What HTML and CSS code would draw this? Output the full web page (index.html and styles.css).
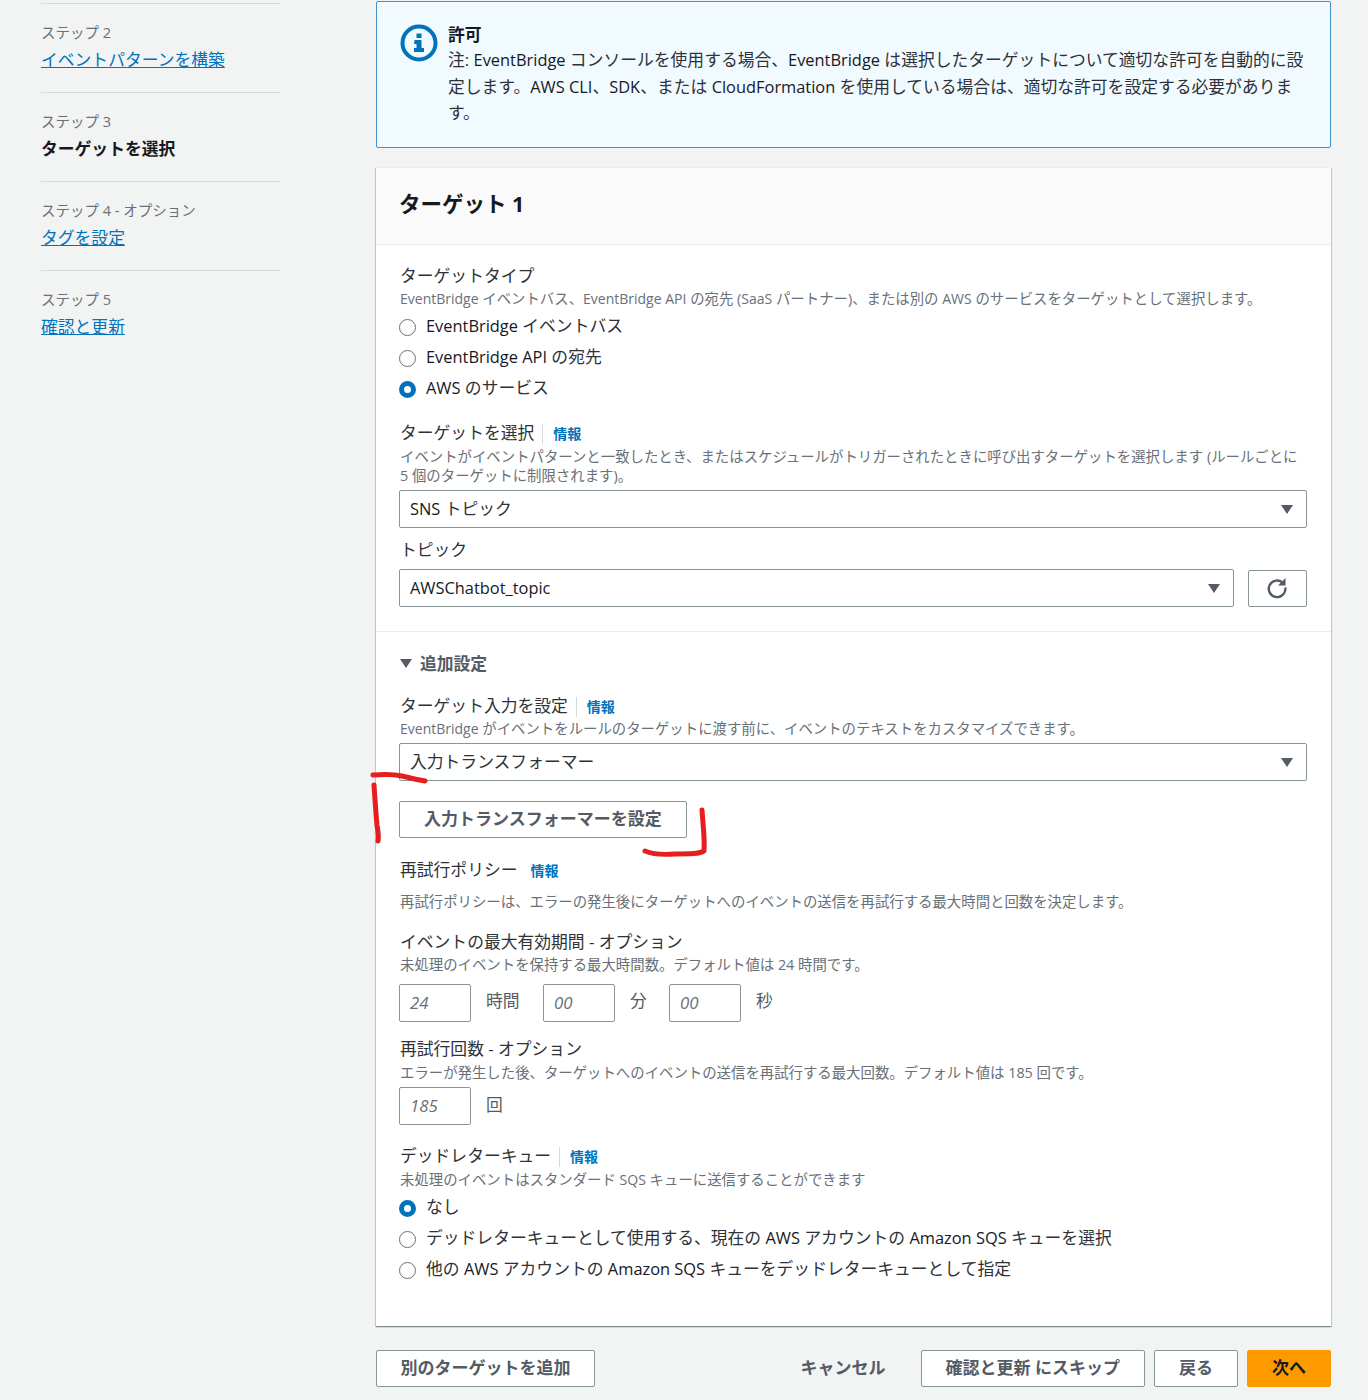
FILE: index.html
```html
<!DOCTYPE html>
<html lang="ja">
<head>
<meta charset="utf-8">
<title>ターゲットを選択</title>
<link rel="stylesheet" href="styles.css">
</head>
<body>
<div class="page">
  <nav class="steps">
    <div class="step"><div class="step-no">ステップ 2</div><a class="step-link" href="#">イベントパターンを構築</a></div>
    <div class="step"><div class="step-no">ステップ 3</div><div class="step-current">ターゲットを選択</div></div>
    <div class="step"><div class="step-no">ステップ 4 - オプション</div><a class="step-link" href="#">タグを設定</a></div>
    <div class="step"><div class="step-no">ステップ 5</div><a class="step-link" href="#">確認と更新</a></div>
  </nav>
  <main class="main">
    <section class="alert">
      <svg class="alert-icon" width="38" height="38" viewBox="0 0 38 38"><circle cx="19" cy="19" r="16.5" fill="none" stroke="#0073bb" stroke-width="4"/><rect x="16.5" y="9.5" width="5" height="4.5" fill="#0073bb"/><path d="M14.500 16h7v8h2.500v4h-10v-4h2.500v-4h-2.500z" fill="#0073bb"/></svg>
      <div class="alert-body">
        <div class="alert-title">許可</div>
        <p class="alert-text">
          <span class="alert-line">注: <span class="en">EventBridge</span> コンソールを使用する場合、<span class="en">EventBridge</span> は選択したターゲットについて適切な許可を自動的に設</span>
          <span class="alert-line">定します。<span class="en">AWS CLI</span>、<span class="en">SDK</span>、または <span class="en">CloudFormation</span> を使用している場合は、適切な許可を設定する必要がありま</span>
          <span class="alert-line">す。</span>
        </p>
      </div>
    </section>
    <section class="card">
      <h2 class="card-header">ターゲット 1</h2>
      <div class="card-top">
        <div class="label">ターゲットタイプ</div>
        <div class="desc"><span class="en">EventBridge</span> イベントバス、<span class="en">EventBridge API</span> の宛先 (<span class="en">SaaS</span> パートナー)、または別の <span class="en">AWS</span> のサービスをターゲットとして選択します。</div>
        <div class="radio-group">
          <div class="radio-row"><span class="radio"></span><span><span class="en">EventBridge</span> イベントバス</span></div>
          <div class="radio-row"><span class="radio"></span><span><span class="en">EventBridge API</span> の宛先</span></div>
          <div class="radio-row"><span class="radio checked"></span><span><span class="en">AWS</span> のサービス</span></div>
        </div>
        <div class="label label-select"><span>ターゲットを選択</span><a class="info info-rule" href="#">情報</a></div>
        <div class="desc desc-wrap">イベントがイベントパターンと一致したとき、またはスケジュールがトリガーされたときに呼び出すターゲットを選択します (ルールごとに 5 個のターゲットに制限されます)。</div>
        <div class="select select-sns"><span><span class="en">SNS</span> トピック</span><span class="caret"></span></div>
        <div class="label label-topic">トピック</div>
        <div class="topic-row">
          <div class="select select-grow"><span class="en">AWSChatbot_topic</span><span class="caret"></span></div>
          <button class="refresh" type="button" aria-label="更新"><svg width="22" height="22" viewBox="1 1 22 22"><path d="M17 6A8.300 8.300 0 1 0 19.300 10.500" fill="none" stroke="#545b64" stroke-width="2.400"/><path d="M19.500 1v7.500h-7.500z" fill="#545b64"/></svg></button>
        </div>
      </div>
      <div class="card-bottom">
        <div class="expander"><span class="expander-caret"></span>追加設定</div>
        <div class="label label-input"><span>ターゲット入力を設定</span><a class="info info-rule" href="#">情報</a></div>
        <div class="desc"><span class="en">EventBridge</span> がイベントをルールのターゲットに渡す前に、イベントのテキストをカスタマイズできます。</div>
        <div class="select select-input">入力トランスフォーマー<span class="caret"></span></div>
        <button class="btn btn-config" type="button">入力トランスフォーマーを設定</button>
        <div class="label label-retry"><span>再試行ポリシー</span><a class="info info-plain" href="#">情報</a></div>
        <div class="desc desc-retry">再試行ポリシーは、エラーの発生後にターゲットへのイベントの送信を再試行する最大時間と回数を決定します。</div>
        <div class="label label-age">イベントの最大有効期間 - オプション</div>
        <div class="desc">未処理のイベントを保持する最大時間数。デフォルト値は 24 時間です。</div>
        <div class="inputs">
          <span class="num">24</span><span class="unit unit-h">時間</span>
          <span class="num">00</span><span class="unit">分</span>
          <span class="num">00</span><span class="unit">秒</span>
        </div>
        <div class="label label-count">再試行回数 - オプション</div>
        <div class="desc desc-count">エラーが発生した後、ターゲットへのイベントの送信を再試行する最大回数。デフォルト値は 185 回です。</div>
        <div class="inputs inputs-count"><span class="num">185</span><span class="unit">回</span></div>
        <div class="label label-dlq"><span>デッドレターキュー</span><a class="info info-rule" href="#">情報</a></div>
        <div class="desc desc-dlq">未処理のイベントはスタンダード <span class="en">SQS</span> キューに送信することができます</div>
        <div class="radio-group">
          <div class="radio-row"><span class="radio checked"></span>なし</div>
          <div class="radio-row"><span class="radio"></span><span>デッドレターキューとして使用する、現在の <span class="en">AWS</span> アカウントの <span class="en">Amazon SQS</span> キューを選択</span></div>
          <div class="radio-row"><span class="radio"></span><span>他の <span class="en">AWS</span> アカウントの <span class="en">Amazon SQS</span> キューをデッドレターキューとして指定</span></div>
        </div>
      </div>
    </section>
    <footer class="footer">
      <button class="btn btn-add" type="button">別のターゲットを追加</button>
      <div class="footer-right">
        <button class="btn-link" type="button">キャンセル</button>
        <button class="btn" type="button">確認と更新 にスキップ</button>
        <button class="btn" type="button">戻る</button>
        <button class="btn btn-primary" type="button">次へ</button>
      </div>
    </footer>
  </main>
</div>
<svg class="marks" width="1368" height="1400" viewBox="0 0 1368 1400" aria-hidden="true">
  <g fill="none" stroke="#e61e1e" stroke-width="5" stroke-linecap="round" stroke-linejoin="round">
    <path d="M373 775C385 774 393 774 402 776C410 778 418 780 425 781"/>
    <path d="M374 785C375 800 376 815 377 825C378 832 379 836 378 841"/>
    <path d="M702 810C703 825 705 840 704 851C700 854 690 854 675 854C662 855 652 854 645 851"/>
  </g>
</svg>
</body>
</html>
```
FILE: styles.css
```css
* { box-sizing: border-box; }
html, body { margin: 0; padding: 0; }
body {
  position: relative;
  height: 1400px;
  overflow: hidden;
  background: #f2f3f3;
  color: #2e3238;
  font-family: "Open Sans", "Noto Sans CJK JP", sans-serif;
  font-size: 16.800px;
}
a { color: #0073bb; }
.en { font-size: 16.400px; color: #16191f; }
.page { display: flex; padding: 1px 37px 0 41px; gap: 96px; }
.steps { width: 239px; flex: none; margin-top: 2px; }
.step { height: 89px; padding-top: 17px; border-top: 1px solid #d5dbdb; }
.step-no { height: 25px; line-height: 24px; font-size: 14.500px; color: #687078; }
.step-link, .step-current { display: block; width: fit-content; line-height: 28px; font-size: 16.800px; }
.step-current { font-weight: 700; color: #16191f; }
.main { width: 955px; flex: none; }
.alert {
  display: flex; gap: 10px; height: 147px; padding: 22px 24px 0 23px;
  background: #f1faff; border: 1px solid #3f93c9; border-radius: 2px;
}
.alert-icon { flex: none; }
.alert-title { font-weight: 700; line-height: 22px; height: 23px; color: #16191f; }
.alert-text { margin: 0; line-height: 26.500px; }
.alert-line { display: block; white-space: nowrap; }
.card { margin-top: 19px; background: #fff; height: 1159px; box-shadow: 0 1px 1px rgba(0,28,36,.3), 1px 1px 1px rgba(0,28,36,.15), -1px 1px 1px rgba(0,28,36,.15); border-top: 1px solid #eaeded; }
.card-header { margin: 0; height: 77px; padding: 0 24px 0 23px; background: #fafafa; border-bottom: 1px solid #eaeded; color: #16191f; font-size: 21.500px; font-weight: 700; line-height: 72px; }
.card-top { padding: 19px 24px 0 23px; height: 387px; border-bottom: 1px solid #eaeded; }
.card-bottom { padding: 18px 24px 0 23px; }
.label { display: flex; align-items: center; height: 24px; line-height: 24px; padding-left: 1px; }
.desc { font-size: 14.400px; line-height: 19px; padding-left: 1px; color: #687078; margin-top: 1px; height: 19px; }
.desc .en { font-size: 14px; color: #687078; }
.desc-wrap { height: 38px; margin-top: 2px; padding-right: 5px; }
.radio-group { margin-top: 1px; }
.radio-row { display: flex; align-items: center; height: 31px; gap: 10px; }
.radio { width: 17px; height: 17px; flex: none; margin-top: 5px; border: 1.500px solid #687078; border-radius: 50%; background: #fff; }
.radio.checked { border: 5px solid #0073bb; }
.label-select { margin-top: 19px; }
.info { font-size: 14px; font-weight: 700; color: #0073bb; text-decoration: none; line-height: 20px; margin-top: 2px; }
.info-rule { margin-left: 8px; padding-left: 10px; border-left: 1px solid #d5dbdb; }
.info-plain { margin-left: 13px; }
.select { position: relative; display: flex; align-items: center; height: 38px; padding: 0 10px 2px; background: #fff; border: 1px solid #879596; border-radius: 2px; }
.select-sns { margin-top: 5px; }
.label-topic { margin-top: 10px; }
.topic-row { display: flex; gap: 14px; margin-top: 7px; }
.select-grow { flex: 1; }
.caret { position: absolute; right: 13px; top: 14px; width: 0; height: 0; border-left: 6.500px solid transparent; border-right: 6.500px solid transparent; border-top: 9px solid #545b64; }
.refresh { width: 59px; height: 37px; margin-top: 1px; display: flex; align-items: center; justify-content: center; padding: 0; background: #fff; border: 1px solid #879596; border-radius: 2px; }
.expander { display: flex; align-items: center; height: 26px; padding-left: 1px; font-weight: 700; font-size: 16.800px; color: #545b64; gap: 8px; }
.expander-caret { width: 0; height: 0; border-left: 6.500px solid transparent; border-right: 6.500px solid transparent; border-top: 9px solid #545b64; }
.label-input { margin-top: 18px; }
.select-input { margin-top: 5px; }
.btn { height: 37px; padding: 0 24px 5px; background: #fff; border: 1px solid #879596; border-radius: 2px; color: #545b64; font: 700 17px "Open Sans", "Noto Sans CJK JP", sans-serif; white-space: nowrap; }
.btn-add { padding: 0 23.500px 5px; }
.btn-config { display: block; margin-top: 20px; }
.label-retry { margin-top: 20px; }
.desc-retry { margin-top: 10px; }
.label-age { margin-top: 19px; }
.inputs { display: flex; align-items: flex-start; margin-top: 10px; height: 38px; }
.num { width: 72px; height: 38px; padding: 0 10px; line-height: 36px; background: #fff; border: 1px solid #879596; border-radius: 2px; font-style: italic; color: #687078; }
.unit { margin-left: 15px; width: 39px; line-height: 34px; color: #545b64; }
.unit-h { width: 57px; }
.label-count { margin-top: 15px; }
.desc-count { margin-top: 2px; }
.inputs-count { margin-top: 5px; }
.inputs-count .unit { line-height: 36px; }
.label-dlq { margin-top: 19px; }
.desc-dlq { margin-top: 2px; }
.footer { display: flex; justify-content: space-between; margin-top: 24px; }
.footer-right { display: flex; gap: 9px; align-items: center; }
.btn-link { margin-right: 26px; padding: 0 0 5px; background: none; border: 0; color: #545b64; font: 700 17px "Open Sans", "Noto Sans CJK JP", sans-serif; }
.btn-primary { background: #ff9900; border-color: #ff9900; color: #16191f; }
.marks { position: absolute; left: 0; top: 0; pointer-events: none; }
```
